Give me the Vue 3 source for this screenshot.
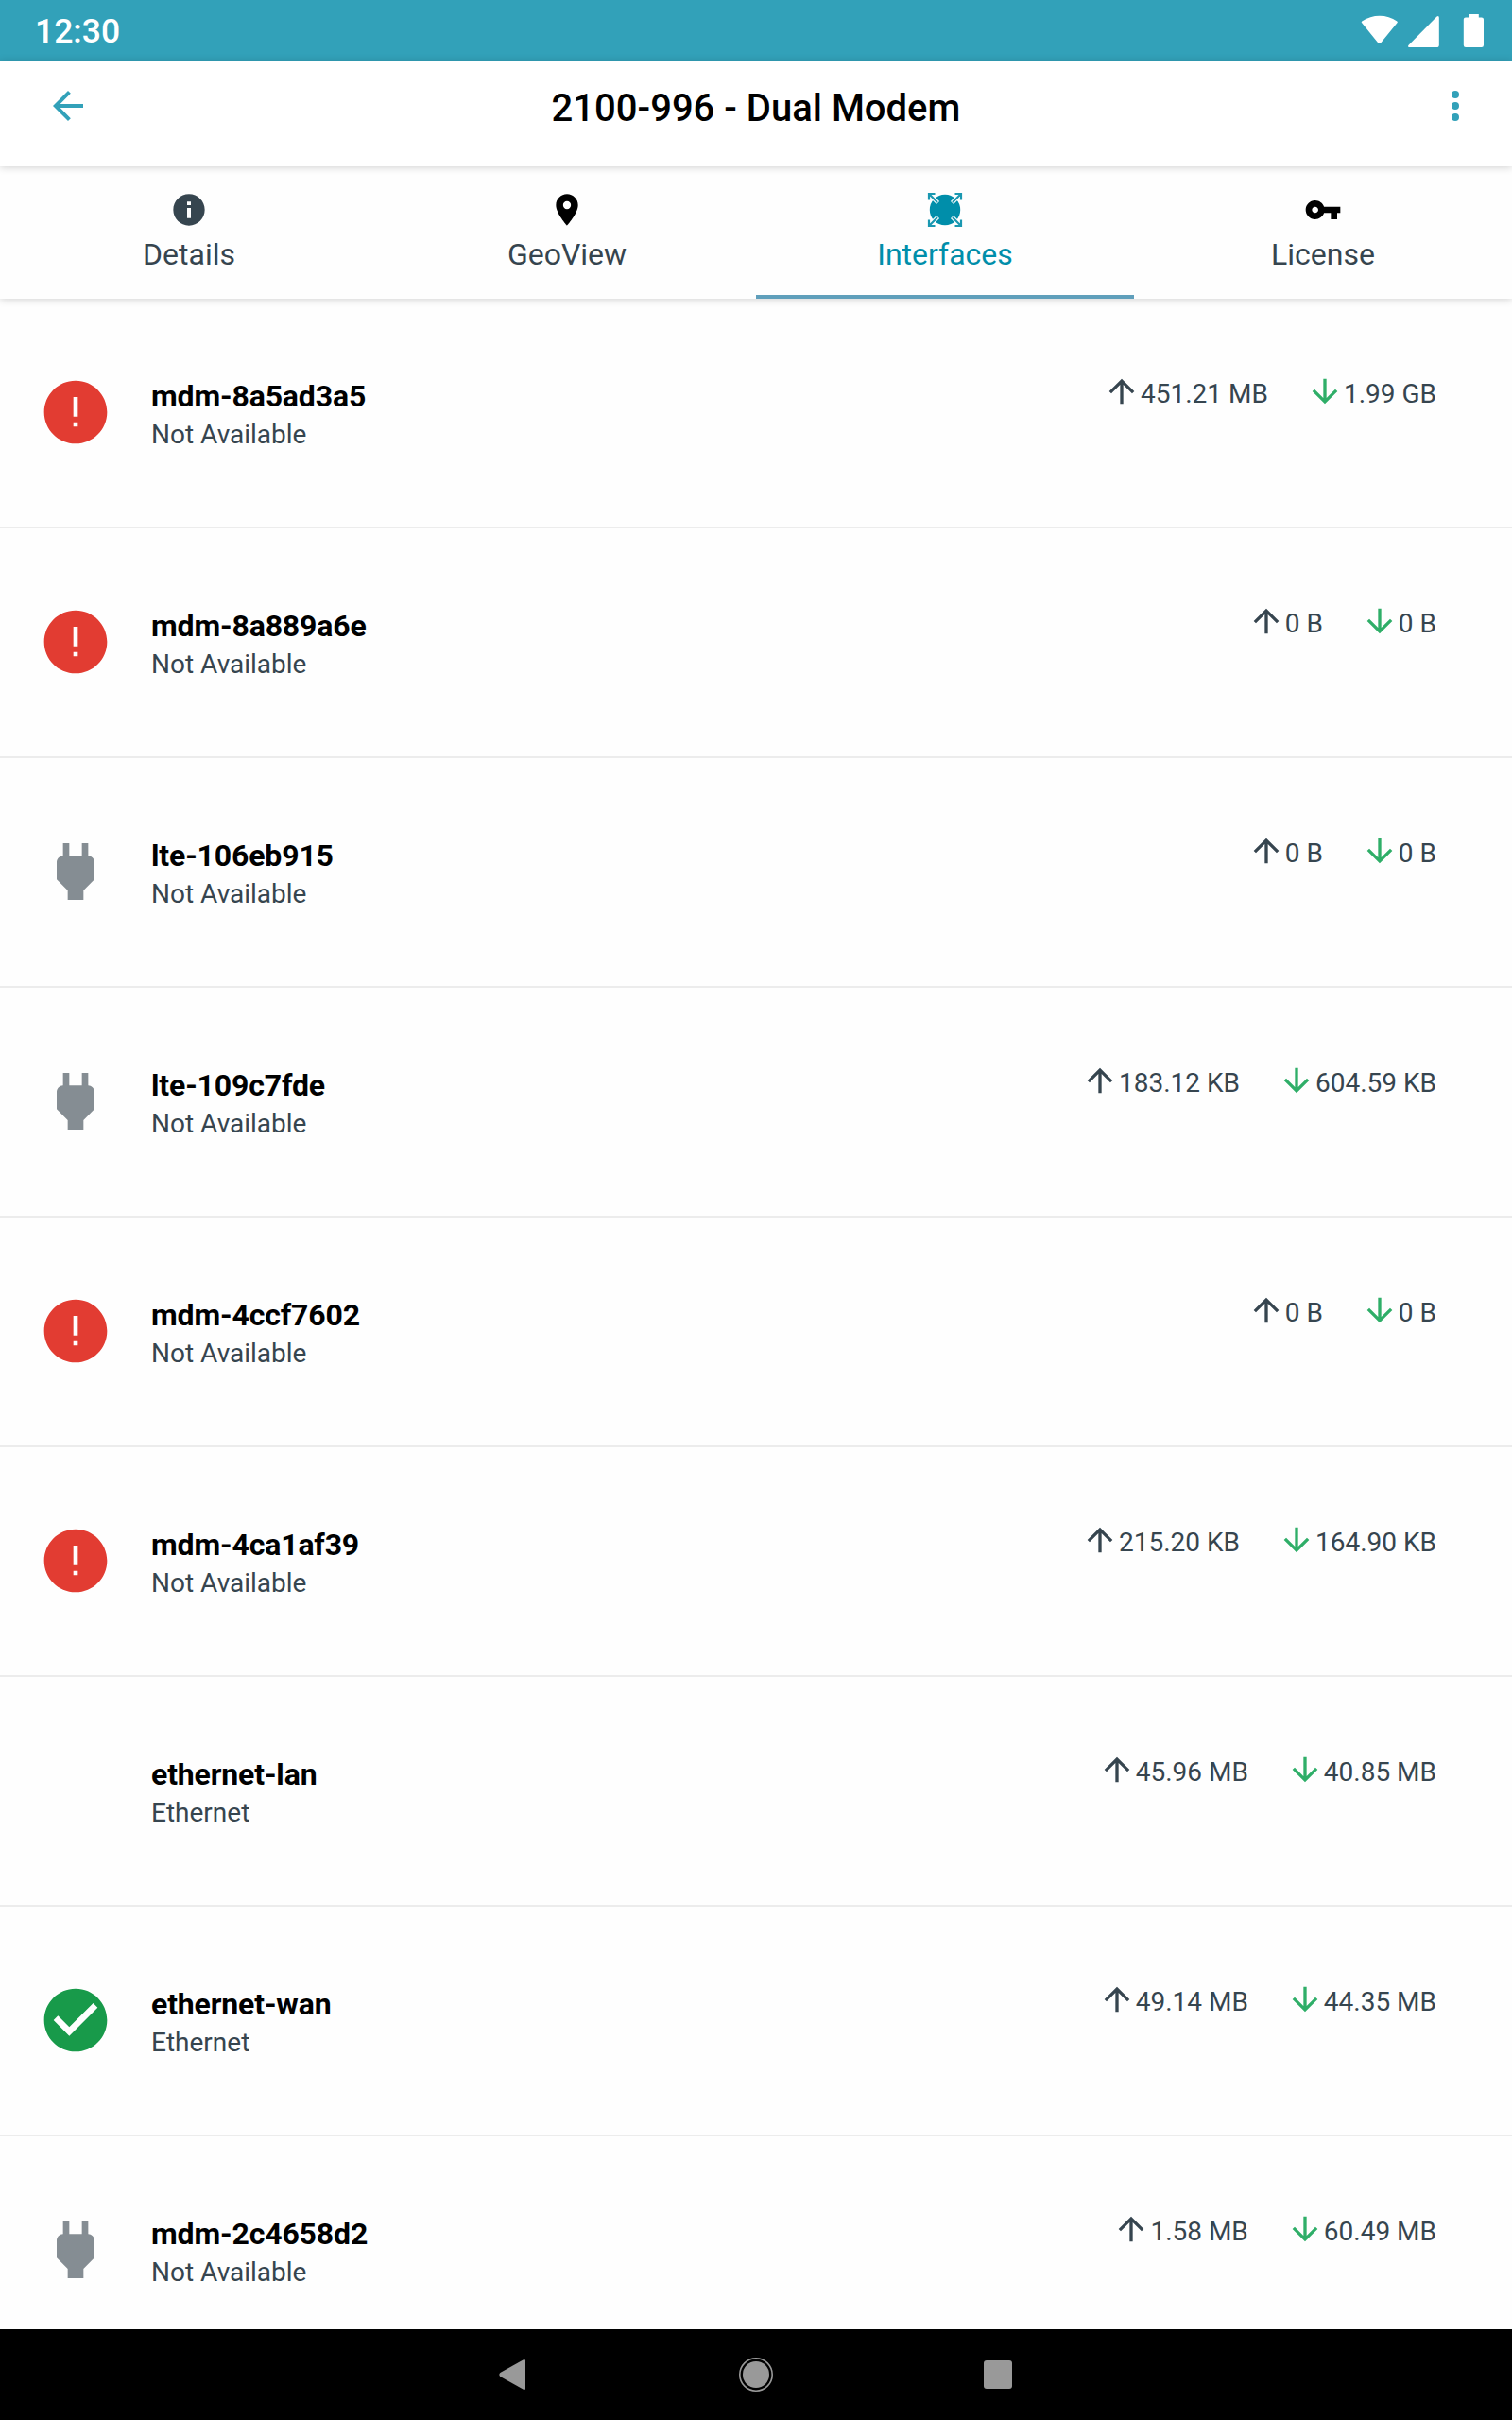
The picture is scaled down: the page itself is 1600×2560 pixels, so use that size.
<template>
  <div class="screen">
    <div class="status-bar">
      <span class="clock">12:30</span>
      <svg class="status-icons" width="132" height="38" viewBox="0 0 132 38">
        <path d="M1 9.900Q0.200 9.100 1.200 8.400C12.500 0.800 27.500 0.800 38.300 8.400Q39.300 9.100 38.600 9.900L21.300 31.200Q19.700 32.700 18.200 31.200Z" />
        <path d="M50.600 33.800L80.500 3.600Q82.700 2 82.800 4.700V33.400Q82.800 36 80.300 36H51.500Q49 36 50.600 33.800Z" />
        <path d="M114 1h10.800v3.400h3q2.200 0 2.200 2.200v27.200q0 2.200-2.200 2.200h-16.800q-2.200 0-2.200-2.200V6.600q0-2.200 2.200-2.200h3z" />
      </svg>
    </div>

    <header class="app-bar">
      <svg class="action" viewBox="0 0 24 24">
        <path d="M20 11H7.830l5.590-5.590L12 4l-8 8 8 8 1.410-1.410L7.830 13H20v-2z" />
      </svg>
      <h1>2100-996 - Dual Modem</h1>
      <svg class="action" viewBox="0 0 24 24">
        <circle v-for="y in [6, 12, 18]" :key="y" cx="12" :cy="y" r="2" />
      </svg>
    </header>

    <nav class="tabs">
      <button
        v-for="tab in tabs"
        :key="tab.name"
        class="tab"
        :class="[tab.icon, { active: tab.name === current }]"
        @click="current = tab.name"
      >
        <svg v-if="tab.icon === 'expand'" viewBox="0 0 40 40">
          <circle cx="20" cy="20" r="16.200" />
          <g v-for="angle in [0, 90, 180, 270]" :key="angle" :transform="`rotate(${angle} 20 20)`">
            <path class="halo" d="M3 3l9.500 9.500" />
            <path class="line" d="M3 9.500V3h6.500M4 4l8 8" />
          </g>
        </svg>
        <svg v-else viewBox="0 0 24 24">
          <path :d="icons[tab.icon]" />
        </svg>
        <span>{{ tab.name }}</span>
      </button>
    </nav>

    <main class="list">
      <div v-for="item in interfaces" :key="item.name" class="row">
        <svg class="state" :class="item.state" viewBox="0 0 24 24">
          <path v-if="item.state" :d="icons[item.state]" />
        </svg>
        <div class="details">
          <div class="name">{{ item.name }}</div>
          <div class="type">{{ item.type }}</div>
        </div>
        <div class="traffic up">
          <svg viewBox="0 0 24 24"><path :d="icons.up" /></svg>
          <span>{{ item.up }}</span>
        </div>
        <div class="traffic down">
          <svg viewBox="0 0 24 24"><path :d="icons.down" /></svg>
          <span>{{ item.down }}</span>
        </div>
      </div>
    </main>

    <footer class="nav-bar">
      <svg width="544" height="36" viewBox="0 0 544 36">
        <path d="M25.500 2.400Q28 1 28 3.500V32.500Q28 35 25.500 33.600L1.300 20Q-0.700 18 1.300 16Z" />
        <circle class="ring" cx="272" cy="18" r="17.200" />
        <circle cx="272" cy="18" r="14" />
        <rect x="513" y="3" width="30" height="30" rx="3" />
      </svg>
    </footer>
  </div>
</template>

<script setup>
import { ref } from "vue";

const current = ref("Interfaces");

const tabs = [
  { name: "Details", icon: "info" },
  { name: "GeoView", icon: "place" },
  { name: "Interfaces", icon: "expand" },
  { name: "License", icon: "key" },
];

const interfaces = ref([
  { name: "mdm-8a5ad3a5", type: "Not Available", state: "error", up: "451.21 MB", down: "1.99 GB" },
  { name: "mdm-8a889a6e", type: "Not Available", state: "error", up: "0 B", down: "0 B" },
  { name: "lte-106eb915", type: "Not Available", state: "plug", up: "0 B", down: "0 B" },
  { name: "lte-109c7fde", type: "Not Available", state: "plug", up: "183.12 KB", down: "604.59 KB" },
  { name: "mdm-4ccf7602", type: "Not Available", state: "error", up: "0 B", down: "0 B" },
  { name: "mdm-4ca1af39", type: "Not Available", state: "error", up: "215.20 KB", down: "164.90 KB" },
  { name: "ethernet-lan", type: "Ethernet", state: "", up: "45.96 MB", down: "40.85 MB" },
  { name: "ethernet-wan", type: "Ethernet", state: "ok", up: "49.14 MB", down: "44.35 MB" },
  { name: "mdm-2c4658d2", type: "Not Available", state: "plug", up: "1.58 MB", down: "60.49 MB" },
]);

const icons = {
  info: "M12 2C6.480 2 2 6.480 2 12s4.480 10 10 10 10-4.480 10-10S17.520 2 12 2zm1.200 15.200h-2.400v-6.400h2.400v6.400zm0-8.200h-2.400V6.700h2.400V9z",
  place: "M12 2C8.130 2 5 5.130 5 9c0 5.250 7 13 7 13s7-7.750 7-13c0-3.870-3.130-7-7-7zm0 9.500a2.500 2.500 0 0 1 0-5 2.500 2.500 0 0 1 0 5z",
  key: "M12.650 10C11.830 7.670 9.610 6 7 6c-3.310 0-6 2.690-6 6s2.690 6 6 6c2.610 0 4.830-1.670 5.650-4H17v4h4v-4h2v-4H12.650zM7 14c-1.100 0-2-.9-2-2s.9-2 2-2 2 .9 2 2-.9 2-2 2z",
  error: "M12 2C6.480 2 2 6.480 2 12s4.480 10 10 10 10-4.480 10-10S17.520 2 12 2zm.7 14.600h-1.400v-1.400h1.400v1.400zm0-3.200h-1.400V7.200h1.400v6.200z",
  ok: "M12 2C6.480 2 2 6.480 2 12s4.480 10 10 10 10-4.480 10-10S17.520 2 12 2zm-2 15l-5-5 1.410-1.410L10 14.170l7.590-7.590L19 8l-9 9z",
  plug: "M16.010 7L16 3h-2v4h-4V3H8v4h-.01C7 6.990 6 7.990 6 8.990v5.490L9.500 18v3h5v-3l3.500-3.510v-5.500c0-1-1-2-1.990-1.990z",
  up: "M4 12l1.410 1.410L11 7.830V20h2V7.830l5.580 5.590L20 12l-8-8-8 8z",
  down: "M20 12l-1.410-1.410L13 16.170V4h-2v12.170l-5.580-5.590L4 12l8 8 8-8z",
};
</script>

<style>
body {
  margin: 0;
}
</style>

<style scoped>
.screen {
  display: flex;
  flex-direction: column;
  width: 1600px;
  height: 2560px;
  overflow: hidden;
  background: #fefefe;
  color: #36454f;
  font-family: Roboto, sans-serif;
}

.status-bar {
  display: flex;
  flex: none;
  justify-content: space-between;
  box-sizing: border-box;
  height: 64px;
  padding: 14px 28px 0 37px;
  background: #32a1b9;
  color: #fff;
  fill: #fff;
}
.clock {
  font-size: 35.5px;
  font-weight: 500;
  line-height: 39px;
}

.app-bar {
  display: flex;
  flex: none;
  align-items: center;
  justify-content: space-between;
  box-sizing: border-box;
  height: 112px;
  padding: 0 36px 16px 48px;
  background: #fff;
  box-shadow: 0 1px 8px rgba(0, 0, 0, 0.18);
  z-index: 2;
}
.app-bar h1 {
  margin: 5px 0 0;
  padding-right: 12px;
  color: #000;
  font-size: 40px;
  font-weight: 500;
  line-height: 48px;
}
.action {
  width: 48px;
  height: 48px;
  fill: #32a1b9;
}

.tabs {
  display: grid;
  flex: none;
  grid-template-columns: repeat(4, 1fr);
  height: 140px;
  background: #fefefe;
  box-shadow: 0 1px 8px rgba(0, 0, 0, 0.18);
  z-index: 1;
}
.tab {
  display: flex;
  flex-direction: column;
  align-items: center;
  margin: 0;
  padding: 26px 0 0;
  border: 0;
  border-bottom: 4px solid transparent;
  background: none;
  color: #36454f;
  font: 32px/38px Roboto, sans-serif;
}
.tab svg {
  width: 40px;
  height: 40px;
  margin-bottom: 8px;
}
.tab.info svg {
  fill: #36454f;
}
.tab.active {
  border-color: #5f9fbb;
  color: #008eaa;
  fill: #008eaa;
}
.halo {
  stroke: #fefefe;
  stroke-width: 4.4;
}
.line {
  fill: none;
  stroke: #1a98b1;
  stroke-width: 2.2;
}

.list {
  flex: 1;
  overflow: hidden;
}
.row {
  display: flex;
  align-items: flex-start;
  box-sizing: border-box;
  height: 243px;
  padding: 0 80px 0 40px;
  border-bottom: 2px solid #ececec;
}
.state {
  width: 80px;
  height: 80px;
  margin: 80px 40px 0 0;
}
.error {
  fill: #e23c32;
}
.plug {
  fill: #858d93;
}
.ok {
  fill: #189a4a;
}
.details {
  flex: 1;
  padding-top: 84px;
}
.name {
  color: #000;
  font-size: 32px;
  font-weight: 700;
  letter-spacing: -0.15px;
  line-height: 38px;
}
.type {
  margin-top: 5px;
  font-size: 28px;
  line-height: 33px;
}
.traffic {
  display: flex;
  margin: 78px 0 0 40px;
  font-size: 28px;
  line-height: 33px;
}
.traffic svg {
  width: 40px;
  height: 40px;
  fill: #36454f;
}
.traffic.down svg {
  fill: #2fae68;
}
.traffic span {
  padding-top: 6px;
}

.nav-bar {
  display: flex;
  flex: none;
  align-items: center;
  justify-content: center;
  height: 96px;
  background: #000;
  fill: #999;
}
.ring {
  fill: none;
  stroke: #999;
  stroke-width: 1.6;
}
</style>
